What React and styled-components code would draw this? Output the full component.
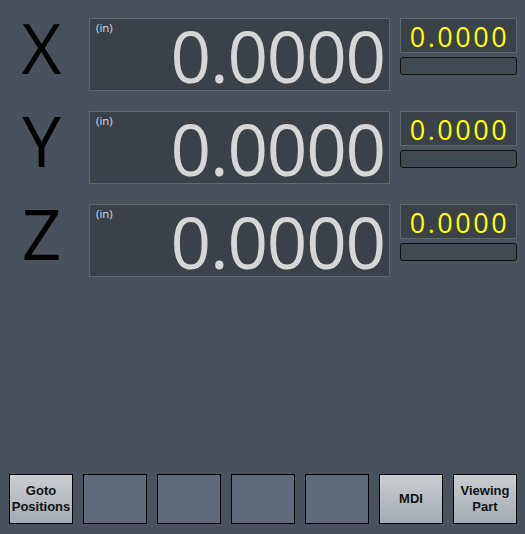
import React from 'react';
import styled, { createGlobalStyle } from 'styled-components';

const GlobalStyle = createGlobalStyle`
  html, body {
    margin: 0;
    padding: 0;
    background: #49525c;
  }
  body {
    font-family: "Open Sans", "Noto Sans", sans-serif;
  }
`;

const Screen = styled.div`
  width: 525px;
  height: 534px;
  display: flex;
  flex-direction: column;
  justify-content: space-between;
  background: #49525c;
  overflow: hidden;
`;

const Axes = styled.div`
  display: flex;
  flex-direction: column;
  gap: 20px;
  padding-top: 18px;
`;

const AxisRow = styled.div`
  display: grid;
  grid-template-columns: 89px 301px 127px;
  grid-template-rows: 73px;
`;

const AxisLetter = styled.div`
  display: flex;
  align-items: center;
  justify-content: center;
  font-family: "Open Sans", "Noto Sans", sans-serif;
  font-size: 69px;
  line-height: 1;
  color: #000;
  padding-right: 6px;
  padding-bottom: 14px;
`;

const Readout = styled.div`
  position: relative;
  box-sizing: border-box;
  height: 73px;
  border: 1px solid #5f676f;
  background: #3a4149;
  display: flex;
  align-items: flex-end;
  justify-content: flex-end;
  padding: 0 4px 0 0;
`;

const Unit = styled.span`
  position: absolute;
  top: 1px;
  left: 6px;
  font-size: 11.5px;
  color: #cddbea;
`;

const BigValue = styled.span`
  font-size: 71px;
  line-height: 56px;
  letter-spacing: -1.2px;
  color: #d6d6d6;
  margin-bottom: 6px;
`;

const Side = styled.div`
  margin-left: 10px;
  display: flex;
  flex-direction: column;
  gap: 4px;
`;

const SmallReadout = styled.div`
  box-sizing: border-box;
  height: 35px;
  border: 1px solid #5f676f;
  background: #3a4149;
  display: flex;
  align-items: center;
  justify-content: center;
  font-size: 27px;
  letter-spacing: 2.5px;
  color: #ffff00;
  padding: 1px 0 0 2px;
`;

const Bar = styled.div`
  box-sizing: border-box;
  height: 18px;
  border: 1px solid #111;
  border-radius: 3px;
  background: #414951;
`;

const Toolbar = styled.div`
  display: grid;
  grid-template-columns: repeat(7, 64px);
  column-gap: 10px;
  padding: 0 0 10px 9px;
`;

const SoftKey = styled.button`
  box-sizing: border-box;
  height: 50px;
  margin: 0;
  padding: 0;
  border: 1px solid #000;
  border-radius: 0;
  background: ${(p) =>
    p.$empty ? '#5f6b7b' : 'linear-gradient(#cbced1, #a2abb3)'};
  font-family: "Liberation Sans", Arial, sans-serif;
  font-weight: bold;
  font-size: 13px;
  line-height: 16px;
  color: #111;
  display: flex;
  align-items: center;
  justify-content: center;
  text-align: center;
`;

const axes = ['X', 'Y', 'Z'];
const keys = [
  ['Goto', 'Positions'],
  null,
  null,
  null,
  null,
  ['MDI'],
  ['Viewing', 'Part'],
];

export default function App() {
  return (
    <Screen>
      <GlobalStyle />
      <Axes>
        {axes.map((a) => (
          <AxisRow key={a}>
            <AxisLetter>{a}</AxisLetter>
            <Readout>
              <Unit>(in)</Unit>
              <BigValue>0.0000</BigValue>
            </Readout>
            <Side>
              <SmallReadout>0.0000</SmallReadout>
              <Bar />
            </Side>
          </AxisRow>
        ))}
      </Axes>
      <Toolbar>
        {keys.map((k, i) => (
          <SoftKey key={i} $empty={!k}>
            {k && (
              <span>
                {k.map((line, j) => (
                  <React.Fragment key={j}>
                    {j > 0 && <br />}
                    {line}
                  </React.Fragment>
                ))}
              </span>
            )}
          </SoftKey>
        ))}
      </Toolbar>
    </Screen>
  );
}
